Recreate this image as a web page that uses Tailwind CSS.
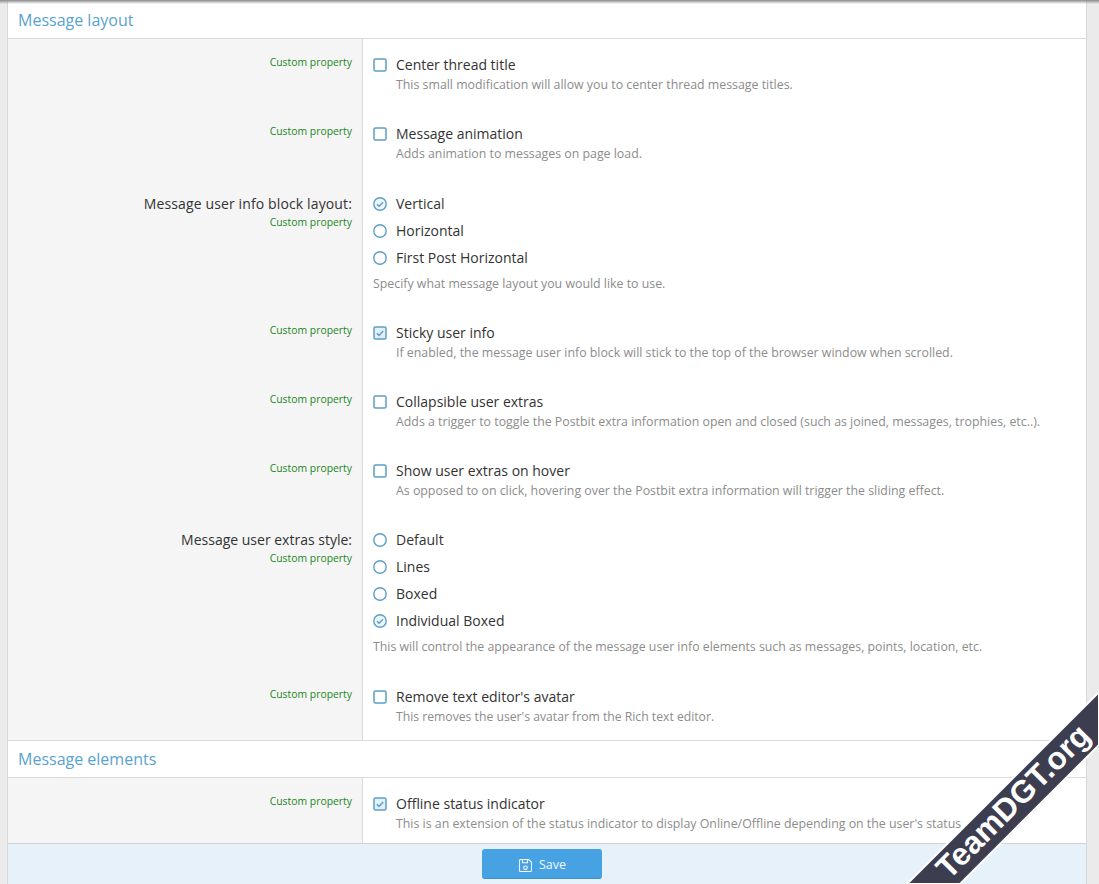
<!DOCTYPE html>
<html lang="en">
<head>
  <meta charset="UTF-8">
  <meta name="viewport" content="width=device-width, initial-scale=1.0">
  <script src="https://cdn.jsdelivr.net/npm/@tailwindcss/browser@4"></script>
  <title>Message layout</title>
</head>
<body class="relative h-[884px] overflow-hidden bg-[#ebebeb] font-['Open_Sans',sans-serif] text-[14px] text-[#333]">
  <!-- shared icons -->
  <svg class="hidden">
    <symbol id="box" viewBox="0 0 14 14"><rect x="1" y="1" width="12" height="12" rx="1.5" fill="none" stroke="#5c9fc6" stroke-width="1.5"/></symbol>
    <symbol id="box-on" viewBox="0 0 14 14"><rect x="1" y="1" width="12" height="12" rx="1.5" fill="#e3f0f9" stroke="#5c9fc6" stroke-width="1.5"/><path d="M3.8 7.2l2.2 2.2 4.2-4.4" fill="none" stroke="#5c9fc6" stroke-width="1.5"/></symbol>
    <symbol id="radio" viewBox="0 0 14 14"><circle cx="7" cy="7" r="6.2" fill="none" stroke="#5c9fc6" stroke-width="1.4"/></symbol>
    <symbol id="radio-on" viewBox="0 0 14 14"><circle cx="7" cy="7" r="6.2" fill="#eef6fb" stroke="#5c9fc6" stroke-width="1.4"/><path d="M4 7.2l2.1 2.1 3.9-4" fill="none" stroke="#5c9fc6" stroke-width="1.4"/></symbol>
  </svg>

  <div class="ml-[7px] h-[884px] w-[1080px] border-x border-[#d8d8d8] bg-white">
    <!-- Message layout -->
    <h2 class="flex h-[39px] items-center border-b border-[#dcdcdc] pt-[2px] pl-[10px] text-[16px] text-[#57a3d0]">Message layout</h2>

    <div class="flex h-[69px]">
      <div class="w-[355px] border-r border-[#dcdcdc] bg-[#f5f5f5] pt-[15px] pr-[10px] text-right">
        <div class="text-[10.4px] leading-4 text-[#1a861a]">Custom property</div>
      </div>
      <div class="flex-1 pt-[16px] pl-[10px]">
        <div class="flex h-5 items-center leading-5"><svg class="mr-[9px] h-[14px] w-[14px]"><use href="#box"/></svg>Center thread title</div>
        <div class="pl-[23px] text-[12.35px] leading-5 text-[#8c8c8c]">This small modification will allow you to center thread message titles.</div>
      </div>
    </div>

    <div class="flex h-[70px]">
      <div class="w-[355px] border-r border-[#dcdcdc] bg-[#f5f5f5] pt-[15px] pr-[10px] text-right">
        <div class="text-[10.4px] leading-4 text-[#1a861a]">Custom property</div>
      </div>
      <div class="flex-1 pt-[16px] pl-[10px]">
        <div class="flex h-5 items-center leading-5"><svg class="mr-[9px] h-[14px] w-[14px]"><use href="#box"/></svg>Message animation</div>
        <div class="pl-[23px] text-[12.35px] leading-5 text-[#8c8c8c]">Adds animation to messages on page load.</div>
      </div>
    </div>

    <div class="flex h-[129px]">
      <div class="w-[355px] border-r border-[#dcdcdc] bg-[#f5f5f5] pt-[16px] pr-[10px] text-right">
        <div class="leading-5 tracking-[0.13px]">Message user info block layout:</div>
        <div class="text-[10.4px] leading-4 text-[#1a861a]">Custom property</div>
      </div>
      <div class="flex-1 pt-[16px] pl-[10px]">
        <div class="mb-[7px] flex h-5 items-center leading-5"><svg class="mr-[9px] h-[14px] w-[14px]"><use href="#radio-on"/></svg>Vertical</div>
        <div class="mb-[7px] flex h-5 items-center leading-5"><svg class="mr-[9px] h-[14px] w-[14px]"><use href="#radio"/></svg>Horizontal</div>
        <div class="flex h-5 items-center leading-5"><svg class="mr-[9px] h-[14px] w-[14px]"><use href="#radio"/></svg>First Post Horizontal</div>
        <div class="mt-[6px] text-[12.35px] leading-5 text-[#8c8c8c]">Specify what message layout you would like to use.</div>
      </div>
    </div>

    <div class="flex h-[69px]">
      <div class="w-[355px] border-r border-[#dcdcdc] bg-[#f5f5f5] pt-[15px] pr-[10px] text-right">
        <div class="text-[10.4px] leading-4 text-[#1a861a]">Custom property</div>
      </div>
      <div class="flex-1 pt-[16px] pl-[10px]">
        <div class="flex h-5 items-center leading-5"><svg class="mr-[9px] h-[14px] w-[14px]"><use href="#box-on"/></svg>Sticky user info</div>
        <div class="pl-[23px] text-[12.35px] leading-5 text-[#8c8c8c]">If enabled, the message user info block will stick to the top of the browser window when scrolled.</div>
      </div>
    </div>

    <div class="flex h-[69px]">
      <div class="w-[355px] border-r border-[#dcdcdc] bg-[#f5f5f5] pt-[15px] pr-[10px] text-right">
        <div class="text-[10.4px] leading-4 text-[#1a861a]">Custom property</div>
      </div>
      <div class="flex-1 pt-[16px] pl-[10px]">
        <div class="flex h-5 items-center leading-5"><svg class="mr-[9px] h-[14px] w-[14px]"><use href="#box"/></svg>Collapsible user extras</div>
        <div class="pl-[23px] text-[12.35px] leading-5 text-[#8c8c8c]">Adds a trigger to toggle the Postbit extra information open and closed (such as joined, messages, trophies, etc..).</div>
      </div>
    </div>

    <div class="flex h-[69px]">
      <div class="w-[355px] border-r border-[#dcdcdc] bg-[#f5f5f5] pt-[15px] pr-[10px] text-right">
        <div class="text-[10.4px] leading-4 text-[#1a861a]">Custom property</div>
      </div>
      <div class="flex-1 pt-[16px] pl-[10px]">
        <div class="flex h-5 items-center leading-5"><svg class="mr-[9px] h-[14px] w-[14px]"><use href="#box"/></svg>Show user extras on hover</div>
        <div class="pl-[23px] text-[12.35px] leading-5 text-[#8c8c8c]">As opposed to on click, hovering over the Postbit extra information will trigger the sliding effect.</div>
      </div>
    </div>

    <div class="flex h-[157px]">
      <div class="w-[355px] border-r border-[#dcdcdc] bg-[#f5f5f5] pt-[16px] pr-[10px] text-right">
        <div class="leading-5">Message user extras style:</div>
        <div class="text-[10.4px] leading-4 text-[#1a861a]">Custom property</div>
      </div>
      <div class="flex-1 pt-[16px] pl-[10px]">
        <div class="mb-[7px] flex h-5 items-center leading-5"><svg class="mr-[9px] h-[14px] w-[14px]"><use href="#radio"/></svg>Default</div>
        <div class="mb-[7px] flex h-5 items-center leading-5"><svg class="mr-[9px] h-[14px] w-[14px]"><use href="#radio"/></svg>Lines</div>
        <div class="mb-[7px] flex h-5 items-center leading-5"><svg class="mr-[9px] h-[14px] w-[14px]"><use href="#radio"/></svg>Boxed</div>
        <div class="flex h-5 items-center leading-5"><svg class="mr-[9px] h-[14px] w-[14px]"><use href="#radio-on"/></svg>Individual Boxed</div>
        <div class="mt-[6px] text-[12.3px] leading-5 text-[#8c8c8c]">This will control the appearance of the message user info elements such as messages, points, location, etc.</div>
      </div>
    </div>

    <div class="flex h-[69px]">
      <div class="w-[355px] border-r border-[#dcdcdc] bg-[#f5f5f5] pt-[15px] pr-[10px] text-right">
        <div class="text-[10.4px] leading-4 text-[#1a861a]">Custom property</div>
      </div>
      <div class="flex-1 pt-[16px] pl-[10px]">
        <div class="flex h-5 items-center leading-5"><svg class="mr-[9px] h-[14px] w-[14px]"><use href="#box"/></svg>Remove text editor's avatar</div>
        <div class="pl-[23px] text-[12.2px] leading-5 text-[#8c8c8c]">This removes the user's avatar from the Rich text editor.</div>
      </div>
    </div>

    <!-- Message elements -->
    <h2 class="flex h-[38px] items-center border-y border-[#dcdcdc] pl-[10px] text-[16px] text-[#57a3d0]">Message elements</h2>

    <div class="flex h-[65px]">
      <div class="w-[355px] border-r border-[#dcdcdc] bg-[#f5f5f5] pt-[15px] pr-[10px] text-right">
        <div class="text-[10.4px] leading-4 text-[#1a861a]">Custom property</div>
      </div>
      <div class="flex-1 pt-[16px] pl-[10px]">
        <div class="flex h-5 items-center leading-5"><svg class="mr-[9px] h-[14px] w-[14px]"><use href="#box-on"/></svg>Offline status indicator</div>
        <div class="pl-[23px] text-[12.35px] leading-5 text-[#8c8c8c]">This is an extension of the status indicator to display Online/Offline depending on the user's status</div>
      </div>
    </div>

    <!-- Save bar -->
    <div class="flex h-[41px] items-start justify-center border-t border-[#cfd4d8] bg-[#e6f1fa] pt-[5px] pr-[10px]">
      <button class="flex h-[30px] w-[120px] items-center justify-center gap-[6px] rounded-[3px] border-b border-[#3f8fca] bg-[#47a2e3] pt-[3px] text-[12.5px] text-[#f2f9fe]">
        <svg class="h-[15px] w-[15px]" viewBox="0 0 15 15" fill="none" stroke="#f2f9fe" stroke-width="1.1"><path d="M2.5 1.5h8.2l2.8 2.8v8.2a1 1 0 0 1-1 1h-10a1 1 0 0 1-1-1v-10a1 1 0 0 1 1-1z"/><path d="M4.5 1.5v3.2h5v-3.2"/><circle cx="7.5" cy="9.8" r="1.8"/></svg>
        Save
      </button>
    </div>
  </div>

  <!-- top shadow -->
  <div class="absolute inset-x-0 top-0 h-[4px] bg-gradient-to-b from-[#8a8a8a] to-transparent"></div>

  <!-- watermark band -->
  <svg class="absolute top-[684px] left-[899px] h-[200px] w-[200px]" viewBox="899 684 200 200">
    <polygon points="1099,692 907,884 960,884 1099,745" fill="#3d3d50" stroke="#fff" stroke-width="2"/>
  </svg>
  <span class="absolute top-[783px] left-[912px] w-[200px] -rotate-45 text-center font-['Liberation_Sans',sans-serif] text-[31.5px] leading-[38px] font-bold whitespace-nowrap text-white">TeamDGT.org</span>
</body>
</html>
